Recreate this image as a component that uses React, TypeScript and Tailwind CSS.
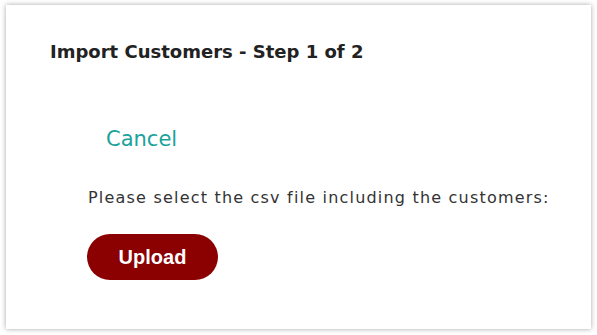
export default function App() {
  return (
    <div className="min-h-screen bg-white pt-[5px] pl-[6px]">
      <div className="w-[585px] h-[324px] bg-white shadow-[0_0_5px_rgba(0,0,0,0.35)] pt-[38px] pl-[44px] font-['DejaVu_Sans',sans-serif]">
        <h1 className="text-[18px] leading-none font-bold text-[#222]">
          Import Customers - Step 1 of 2
        </h1>

        <div className="pl-[56px] pt-[68px]">
          <a href="#" className="block text-[21px] leading-none text-[#1aa39b]">
            Cancel
          </a>
        </div>

        <div className="pl-[38px] pt-[40px]">
          <p className="text-[16px] leading-none tracking-[1.2px] text-[#333]">
            Please select the csv file including the customers:
          </p>
          <button className="-ml-px mt-[28px] w-[131px] h-[46px] rounded-full bg-[#8b0000] text-white text-[20px] font-bold font-['Liberation_Sans',sans-serif] flex items-center justify-center">
            Upload
          </button>
        </div>
      </div>
    </div>
  )
}
